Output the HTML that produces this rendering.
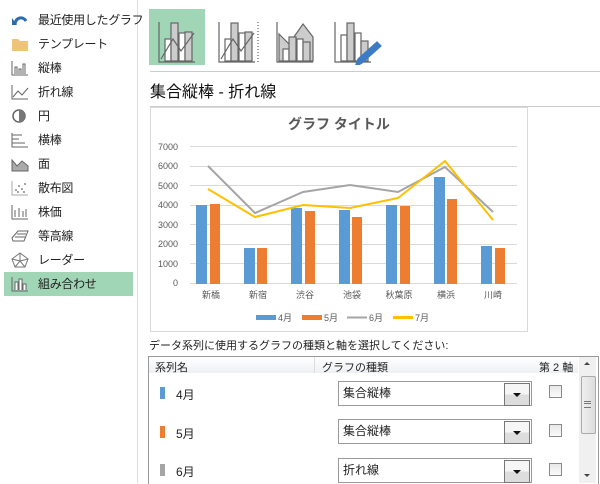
<!DOCTYPE html>
<html><head><meta charset="utf-8"><style>
body{margin:0;width:600px;height:483px;background:#fff;position:relative;overflow:hidden;font-family:"Liberation Sans","Noto Sans CJK JP",sans-serif;color:#222}
.a{position:absolute}
.it{position:absolute;left:4px;width:129px;height:24px;font-size:12px;line-height:24px;white-space:nowrap}
.it span{position:absolute;left:34px;letter-spacing:-0.3px}
.it svg{position:absolute;left:6px;top:4px}
.dd{position:absolute;left:338px;width:192px;height:23px;border:1px solid #999;background:#fff;font-size:12px;line-height:23px}
.dd span{padding-left:4px}
.dd i{position:absolute;right:1px;top:1px;width:24px;height:21px;border:1px solid #777;background:linear-gradient(#f6f6f6,#f6f6f6 50%,#ddd 50%,#ddd)}
.dd i:after{content:"";position:absolute;left:8px;top:9px;border:4px solid transparent;border-top:4px solid #111;border-bottom:0}
.cb{position:absolute;left:549px;width:11px;height:11px;border:1px solid #8a8a8a;background:linear-gradient(#e8e8e8,#fafafa)}
.sw{position:absolute;left:160px;width:5px;height:12px}
.nm{position:absolute;left:176px;font-size:12px}
</style></head><body>
<div class="a" style="left:137px;top:0;width:1px;height:483px;background:#ddd"></div>
<div class="it" style="top:8px"><svg width="20" height="16"><path d="M5 12 C6 5 13 4 16 9" stroke="#2b6cb0" stroke-width="3" fill="none"/><path d="M2 6 L7 13 L2 13Z" fill="#2b6cb0"/></svg><span>最近使用したグラフ</span></div>
<div class="it" style="top:32px"><svg width="20" height="16"><path d="M2 3h6l2 2h8v10H2z" fill="#f0c478"/></svg><span>テンプレート</span></div>
<div class="it" style="top:56px"><svg width="20" height="16" fill="none" stroke="#666"><path d="M2 1v14h16M5 14V7h2v7M9 14V9h2v5M13 14V4h2v10"/></svg><span>縦棒</span></div>
<div class="it" style="top:80px"><svg width="20" height="16" fill="none" stroke="#666"><path d="M2 1v14h16M3 13l5-6 4 4 6-7"/></svg><span>折れ線</span></div>
<div class="it" style="top:104px"><svg width="20" height="16"><circle cx="9" cy="8" r="6" fill="#fff" stroke="#666" stroke-width="1.5"/><path d="M9 8V2a6 6 0 0 1 0 12z" fill="#777"/></svg><span>円</span></div>
<div class="it" style="top:128px"><svg width="20" height="16" fill="none" stroke="#666"><path d="M2 1v14h16M2 3h10M2 7h7M2 11h13"/></svg><span>横棒</span></div>
<div class="it" style="top:152px"><svg width="20" height="16"><path d="M2 4l5 6 5-5 6 5v5H2z" fill="#aaa" stroke="#666"/></svg><span>面</span></div>
<div class="it" style="top:176px"><svg width="20" height="16" fill="#888"><path d="M2 1v14h16" stroke="#aaa" fill="none"/><circle cx="6" cy="10" r="1"/><circle cx="9" cy="6" r="1"/><circle cx="12" cy="9" r="1"/><circle cx="15" cy="4" r="1"/><circle cx="8" cy="12" r="1"/><circle cx="14" cy="12" r="1"/></svg><span>散布図</span></div>
<div class="it" style="top:200px"><svg width="20" height="16" fill="none" stroke="#666"><path d="M2 1v14h16M5 13V6M9 13V4M13 13V7M16 13V5"/></svg><span>株価</span></div>
<div class="it" style="top:224px"><svg width="20" height="16" fill="none" stroke="#666"><path d="M2 10l6-7h10l-4 10H3zM5 9h10M7 6h9"/></svg><span>等高線</span></div>
<div class="it" style="top:248px"><svg width="20" height="16" fill="none" stroke="#777"><path d="M10 1l8 6-3 8H5L2 7zM10 1v8M2 7l8 2 8-2M5 15l5-6 5 6"/></svg><span>レーダー</span></div>
<div class="it" style="top:272px;background:#a0d5b5"><svg width="20" height="16" fill="#fff" stroke="#666"><path d="M2 1v14h16" fill="none"/><path d="M5 14V6h3v8M9 14V3h3v11M13 14V8h3v6"/></svg><span>組み合わせ</span></div>

<div class="a" style="left:149px;top:9px;width:56px;height:56px;background:#a0d5b5"></div>
<svg class="a" style="left:149px;top:9px" width="240" height="56" fill="#ccc" stroke="#666" stroke-width="1.2">
<g><path d="M10 13v40h36" fill="none"/><rect x="16" y="30" width="6" height="22" fill="#fff"/><rect x="22" y="14" width="7" height="38"/><rect x="30" y="24" width="6" height="28" fill="#fff"/><rect x="36" y="23" width="7" height="29"/><path d="M12 50 L24 30 32 42 45 24" fill="none"/></g>
<g transform="translate(60,0)"><path d="M10 13v40h36" fill="none"/><rect x="16" y="30" width="6" height="22" fill="#fff"/><rect x="22" y="14" width="7" height="38"/><rect x="30" y="24" width="6" height="28" fill="#fff"/><rect x="36" y="23" width="7" height="29"/><path d="M12 50 L24 30 32 42 45 24" fill="none"/><path d="M49 13v40" stroke-dasharray="1 2" fill="none"/></g>
<g transform="translate(118,0)"><path d="M10 13v40h36" fill="none"/><path d="M12 25l10 10 14-20 10 13v24H12z"/><rect x="16" y="40" width="6" height="12" fill="#fff"/><rect x="22" y="28" width="7" height="24"/><rect x="30" y="30" width="6" height="22" fill="#fff"/><rect x="36" y="33" width="7" height="19"/></g>
<g transform="translate(176,0)"><path d="M10 13v40h36" fill="none"/><rect x="16" y="26" width="6" height="26" fill="#fff"/><rect x="22" y="14" width="7" height="38"/><rect x="30" y="24" width="6" height="28" fill="#fff"/><rect x="36" y="32" width="7" height="20"/><path d="M30 58 L33 50 L52 33 L56 37 L37 54Z" fill="#3d7bc4" stroke="#3d7bc4"/></g>
</svg>
<div class="a" style="left:150px;top:71px;width:450px;height:1px;background:#ccc"></div>
<div class="a" style="left:150px;top:78px;font-size:16px;color:#111">集合縦棒 - 折れ線</div>
<div class="a" style="left:150px;top:106px;width:450px;height:1px;background:#ccc"></div>

<svg class="a" style="left:150px;top:107px" width="379" height="225">
<rect x="0.5" y="0.5" width="377" height="224" fill="#fff" stroke="#d9d9d9"/>
<text x="189" y="22" text-anchor="middle" font-size="14" font-weight="bold" fill="#595959" font-family="Liberation Sans,Noto Sans CJK JP,sans-serif">グラフ タイトル</text>
<g stroke="#d9d9d9" stroke-width="1">
<path d="M40 176.5H367M40 156.5H367M40 137.5H367M40 117.5H367M40 98.5H367M40 78.5H367M40 59.5H367M40 39.5H367"/></g>
<g font-size="9" fill="#595959" text-anchor="end" font-family="Liberation Sans,sans-serif">
<text x="28" y="179">0</text><text x="28" y="160">1000</text><text x="28" y="140">2000</text><text x="28" y="121">3000</text><text x="28" y="101">4000</text><text x="28" y="82">5000</text><text x="28" y="62">6000</text><text x="28" y="43">7000</text></g>
<g fill="#5b9bd5">
<rect x="46" y="98" width="11" height="79"/><rect x="94" y="141" width="11" height="36"/><rect x="141" y="101" width="11" height="76"/><rect x="189" y="103" width="11" height="74"/><rect x="236" y="98" width="11" height="79"/><rect x="284" y="70" width="11" height="107"/><rect x="331" y="139" width="11" height="38"/></g>
<g fill="#ed7d31">
<rect x="60" y="97" width="10" height="80"/><rect x="107" y="141" width="10" height="36"/><rect x="155" y="104" width="10" height="73"/><rect x="202" y="110" width="10" height="67"/><rect x="250" y="99" width="10" height="78"/><rect x="297" y="92" width="10" height="85"/><rect x="345" y="141" width="10" height="36"/></g>
<polyline points="58,59 105,106 153,85 200,78 248,85 295,60 343,105" fill="none" stroke="#a5a5a5" stroke-width="2"/>
<polyline points="58,82 105,110 153,98 200,101 248,91 295,54 343,113" fill="none" stroke="#ffc000" stroke-width="2"/>
<g font-size="9" fill="#595959" text-anchor="middle" font-family="Liberation Sans,Noto Sans CJK JP,sans-serif">
<text x="61" y="191">新橋</text><text x="108" y="191">新宿</text><text x="155" y="191">渋谷</text><text x="202" y="191">池袋</text><text x="249" y="191">秋葉原</text><text x="296" y="191">横浜</text><text x="343" y="191">川崎</text></g>
<g font-size="9" fill="#595959" font-family="Liberation Sans,Noto Sans CJK JP,sans-serif">
<rect x="106" y="208" width="20" height="5" fill="#5b9bd5"/><text x="128" y="214">4月</text>
<rect x="152" y="208" width="20" height="5" fill="#ed7d31"/><text x="174" y="214">5月</text>
<rect x="197" y="209.5" width="20" height="2" fill="#a5a5a5"/><text x="219" y="214">6月</text>
<rect x="243" y="209" width="20" height="3" fill="#ffc000"/><text x="265" y="214">7月</text></g>
</svg>

<div class="a" style="left:149px;top:337px;font-size:11px">データ系列に使用するグラフの種類と軸を選択してください:</div>
<div class="a" style="left:148px;top:356px;width:449px;height:127px;border:1px solid #999;border-bottom:0"></div>
<div class="a" style="left:149px;top:357px;width:429px;height:16px;background:linear-gradient(#fff,#eef0f3)"></div>
<div class="a" style="left:314px;top:357px;width:1px;height:16px;background:#ddd"></div>
<div class="a" style="left:155px;top:359px;font-size:11px">系列名</div>
<div class="a" style="left:322px;top:359px;font-size:11px">グラフの種類</div>
<div class="a" style="left:539px;top:359px;font-size:11px">第 2 軸</div>
<div class="a" style="left:579px;top:357px;width:17px;height:126px;background:#f0f0f0"></div>
<div class="a" style="left:581px;top:376px;width:13px;height:56px;border:1px solid #aaa;border-radius:2px;background:linear-gradient(90deg,#eee,#ddd)"></div>
<div class="a" style="left:584px;top:401px;width:7px;height:5px;border-top:1px solid #777;border-bottom:1px solid #777"></div>
<div class="a" style="left:584px;top:403px;width:7px;height:1px;background:#777"></div>
<div class="a" style="left:584px;top:362px;border:3px solid transparent;border-bottom:3px solid #444;border-top:0"></div>
<div class="a" style="left:584px;top:474px;border:3px solid transparent;border-top:3px solid #444;border-bottom:0"></div>

<div class="sw" style="top:387px;background:#5b9bd5"></div><div class="nm" style="top:386px">4月</div>
<div class="dd" style="top:381px"><span>集合縦棒</span><i></i></div><div class="cb" style="top:385px"></div>
<div class="sw" style="top:426px;background:#ed7d31"></div><div class="nm" style="top:425px">5月</div>
<div class="dd" style="top:419px"><span>集合縦棒</span><i></i></div><div class="cb" style="top:424px"></div>
<div class="sw" style="top:464px;background:#a5a5a5"></div><div class="nm" style="top:463px">6月</div>
<div class="dd" style="top:458px"><span>折れ線</span><i></i></div><div class="cb" style="top:463px"></div>
</body></html>
